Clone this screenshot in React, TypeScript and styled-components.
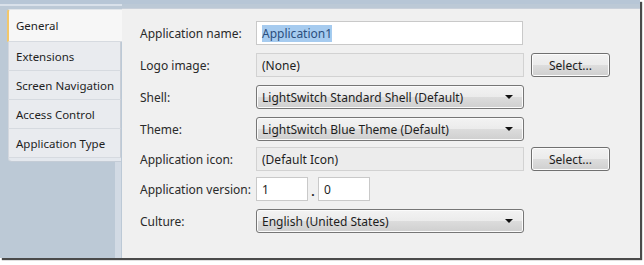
import React from "react";
import styled, { createGlobalStyle, css } from "styled-components";

const Global = createGlobalStyle`
  body {
    margin: 0;
    background: #ffffff;
    font-family: "Noto Sans", "Open Sans", sans-serif;
    font-size: 12px;
    color: #1e1e1e;
  }
`;

const Screen = styled.div`
  width: 644px;
  height: 265px;
  background: #ffffff;
`;

const Frame = styled.div`
  width: 640px;
  height: 258px;
  display: flex;
  background: #bcc9d6;
  box-shadow: 2px 2px 1px #4a4a4a;
  border-top: 4px solid #b7c6d6;
  box-sizing: border-box;
`;

const TabColumn = styled.div`
  width: 122px;
  display: flex;
  flex-direction: column;
  padding-top: 3px;
  box-sizing: border-box;
  border-top: 2px solid #d9e1ea;
`;

type TabProps = {
  $active?: boolean;
};

const Tab = styled.div<TabProps>`
  height: 29px;
  display: flex;
  align-items: center;
  padding-left: 7px;
  margin-left: 8px;
  width: 113px;
  box-sizing: border-box;
  font-size: 11.5px;
  white-space: nowrap;
  background: #e9ebef;
  border-left: 1px solid #d3d7de;
  border-right: 1px solid #c9ced6;
  border-bottom: 1px solid #d6dae0;
  ${({ $active }) =>
    $active &&
    css`
      height: 33px;
      margin-left: 7px;
      width: 115px;
      background: #f7f7f7;
      border-left: 2px solid #f2c76a;
      border-right: none;
      border-top: 1px solid #e2e6ea;
      border-radius: 3px 0 0 0;
    `}
`;

const TabFoot = styled.div`
  height: 4px;
  margin-left: 8px;
  width: 113px;
  box-sizing: border-box;
  background: #e4e8ee;
  border-radius: 0 0 0 5px;
  border-left: 1px solid #d3d7de;
  border-bottom: 1px solid #c4ccd6;
`;

const Filler = styled.div`
  flex: 1;
  margin-right: 1px;
  border-right: 6px solid #d2dae4;
`;

const Panel = styled.div`
  flex: 1;
  margin-top: 4px;
  background: #f0f0f0;
  border-top: 1px solid #c9d0da;
  padding: 12px 0 0 18px;
  display: flex;
  flex-direction: column;
`;

type RowProps = {
  $tight?: boolean;
};

const Row = styled.div<RowProps>`
  display: flex;
  align-items: center;
  height: 24px;
  margin-bottom: ${({ $tight }) => ($tight ? "6px" : "8px")};
`;

const Label = styled.div`
  width: 116px;
  flex-shrink: 0;
  color: #2a2a2a;
  white-space: nowrap;
`;

const Field = styled.div`
  height: 24px;
  box-sizing: border-box;
  display: flex;
  align-items: center;
  padding-left: 5px;
  white-space: nowrap;
`;

const TextBox = styled(Field)<{ $width?: number }>`
  width: ${({ $width }) => $width ?? 268}px;
  background: #ffffff;
  border: 1px solid #c9c9c9;
`;

const ReadOnly = styled(Field)`
  width: 268px;
  background: #ececec;
  border: 1px solid #d2d2d2;
`;

const Combo = styled(Field)`
  width: 268px;
  justify-content: space-between;
  padding: 0 10px 0 5px;
  border: 1px solid #767676;
  border-radius: 3px;
  background: linear-gradient(#f3f3f3 0%, #ebebeb 50%, #dcdcdc 51%, #cfcfcf 100%);
  box-shadow: inset 0 0 0 1px #fbfbfb;
`;

const Arrow = styled.span`
  width: 0;
  height: 0;
  border-left: 4px solid transparent;
  border-right: 4px solid transparent;
  border-top: 4px solid #111;
`;

const Button = styled.div`
  width: 79px;
  height: 24px;
  box-sizing: border-box;
  margin-left: 7px;
  display: flex;
  align-items: center;
  justify-content: center;
  border: 1px solid #707070;
  border-radius: 3px;
  background: linear-gradient(#f2f2f2 0%, #ebebeb 50%, #dddddd 51%, #cfcfcf 100%);
  box-shadow: inset 0 0 0 1px #fcfcfc;
`;

const Selected = styled.span`
  background: #a6cbef;
  color: #2b4f7e;
`;

const Dot = styled.span`
  width: 10px;
  text-align: center;
  align-self: flex-end;
  font-weight: bold;
  line-height: 18px;
`;

const tabs = ["General", "Extensions", "Screen Navigation", "Access Control", "Application Type"];

const App = (): JSX.Element => (
  <Screen>
    <Global />
    <Frame>
      <TabColumn>
        {tabs.map((tab, i) => (
          <Tab key={tab} $active={i === 0}>
            {tab}
          </Tab>
        ))}
        <TabFoot />
        <Filler />
      </TabColumn>
      <Panel>
        <Row>
          <Label>Application name:</Label>
          <TextBox $width={267}>
            <Selected>Application1</Selected>
          </TextBox>
        </Row>
        <Row>
          <Label>Logo image:</Label>
          <ReadOnly>(None)</ReadOnly>
          <Button>Select...</Button>
        </Row>
        <Row>
          <Label>Shell:</Label>
          <Combo>
            LightSwitch Standard Shell (Default)
            <Arrow />
          </Combo>
        </Row>
        <Row $tight>
          <Label>Theme:</Label>
          <Combo>
            LightSwitch Blue Theme (Default)
            <Arrow />
          </Combo>
        </Row>
        <Row $tight>
          <Label>Application icon:</Label>
          <ReadOnly>(Default Icon)</ReadOnly>
          <Button>Select...</Button>
        </Row>
        <Row>
          <Label>Application version:</Label>
          <TextBox $width={52}>1</TextBox>
          <Dot>.</Dot>
          <TextBox $width={52}>0</TextBox>
        </Row>
        <Row>
          <Label>Culture:</Label>
          <Combo>
            English (United States)
            <Arrow />
          </Combo>
        </Row>
      </Panel>
    </Frame>
  </Screen>
);

export default App;
